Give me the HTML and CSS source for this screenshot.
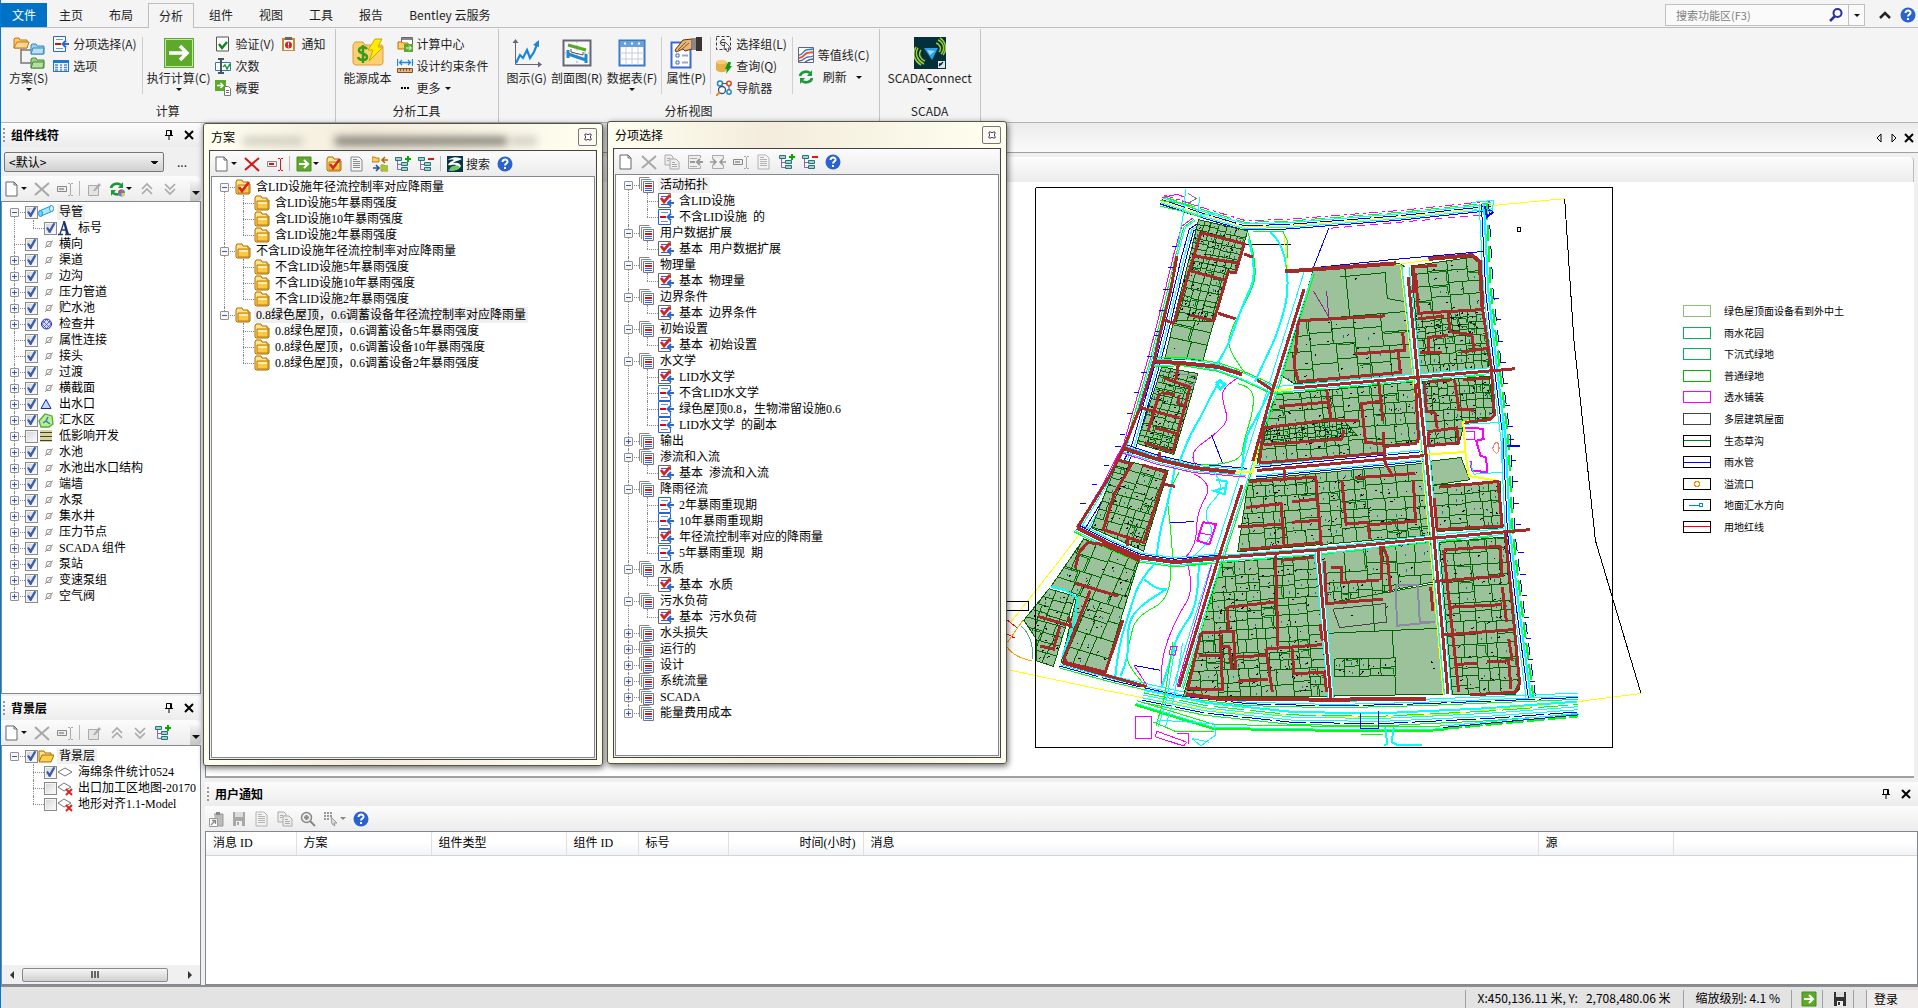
FILE: index.html
```
<!DOCTYPE html>
<html lang="zh-CN">
<head>
    <meta charset="UTF-8">
    <meta name="viewport" content="width=device-width, initial-scale=1.0">
    <title>SewerGEMS</title>
    <link rel="stylesheet" href="styles.css">
</head>
<body>
    <!-- icon sprite -->
    <svg class="sprite" aria-hidden="true">
        <symbol id="folder" viewBox="0 0 16 16"><path d="M1 3l1-2h5l1 2h5v2h2v9l-1 1H2l-1-1z" fill="#ffe488" stroke="#a86c00"/><path d="M3 6h11v8H3z" fill="#ffc844" stroke="#b87a10"/><path d="M4 7h9v2H4z" fill="#fff0b0"/></symbol>
        <symbol id="foldercheck" viewBox="0 0 16 16"><use href="#folder"/><path d="M4 8l3 4 7-9" fill="none" stroke="#d22" stroke-width="2.6"/></symbol>
        <symbol id="open" viewBox="0 0 16 16"><path d="M1 13V3h5l1 2h6v2" fill="#ffe488" stroke="#a86c00"/><path d="M1 14L4 7h12l-3 7z" fill="#ffd050" stroke="#a86c00"/></symbol>
        <symbol id="doc" viewBox="0 0 16 16"><path d="M2 1h8l3 3v11H2z" fill="#fff" stroke="#666"/><path d="M10 1v3h3" fill="none" stroke="#666"/></symbol>
        <symbol id="text" viewBox="0 0 16 16"><path d="M2 1h8l3 3v11H2z" fill="#f4f4f4" stroke="#888"/><path d="M4 5.500h7M4 7.500h7M4 9.500h7M4 11.500h7M4 3.500h4" stroke="#888"/></symbol>
        <symbol id="copy" viewBox="0 0 16 16"><path d="M1 1h6l2 2v8H1z" fill="#eee" stroke="#aaa"/><path d="M6 5h6l3 3v7H6z" fill="#eee" stroke="#aaa"/><path d="M8 8.500h3M8 10.500h5M8 12.500h5M3 4.500h3M3 6.500h2" stroke="#aaa"/></symbol>
        <symbol id="x" viewBox="0 0 16 16"><path d="M1 2l14 13M15 2L1 14" fill="none" stroke="currentColor" stroke-width="2"/></symbol>
        <symbol id="rename" viewBox="0 0 16 16"><path d="M.5 5.500h9v5h-9z" fill="#eee" stroke="#888"/><path d="M2 8h5" stroke="currentColor" stroke-width="2"/><path d="M11 2.500h2M14 2.500h2M13.500 3v11M11 14.500h2M14 14.500h2" stroke="currentColor"/></symbol>
        <symbol id="edit" viewBox="0 0 16 16"><path d="M2.500 4.500h10v10h-10z" fill="#e4e4e4" stroke="#aaa"/><path d="M7 10l6-8 2 2-6 6z" fill="#aaa"/></symbol>
        <symbol id="up" viewBox="0 0 16 16"><path d="M3 8l5-5 5 5M3 13l5-5 5 5" fill="none" stroke="#aaa" stroke-width="1.700"/></symbol>
        <symbol id="down" viewBox="0 0 16 16"><path d="M3 3l5 5 5-5M3 8l5 5 5-5" fill="none" stroke="#aaa" stroke-width="1.700"/></symbol>
        <symbol id="refresh" viewBox="0 0 16 16"><path d="M2 7a6 5 0 0 1 10-3" fill="none" stroke="#1a9a3a" stroke-width="2.600"/><path d="M14 1v6H9z" fill="#1a9a3a"/><path d="M14 9a6 5 0 0 1-10 3" fill="none" stroke="#1a9a3a" stroke-width="2.600"/><path d="M2 15V9h5z" fill="#1a9a3a"/></symbol>
        <symbol id="refreshball" viewBox="0 0 16 16"><use href="#refresh"/><circle cx="12.500" cy="12" r="3.500" fill="#4a8ad8"/><path d="M9 12a3.500 3.500 0 0 1 3.500-3.500V12z" fill="#e44"/><path d="M12.500 12h3.500a3.500 3.500 0 0 1-3.500 3.500z" fill="#ec3"/></symbol>
        <symbol id="treeplus" viewBox="0 0 16 16"><path d="M2.500 3v10.500H6M2.500 8.500H6" fill="none" stroke="#86a"/><path d="M.5 1.500h6v3h-6zM6.500 6.500h6v3h-6zM6.500 11.500h6v3h-6z" fill="#acc" stroke="#277"/><path d="M10 3h6M13 0v6" stroke="#0a0" stroke-width="2"/></symbol>
        <symbol id="treeminus" viewBox="0 0 16 16"><path d="M2.500 3v10.500H6M2.500 8.500H6" fill="none" stroke="#86a"/><path d="M.5 1.500h6v3h-6zM6.500 6.500h6v3h-6zM6.500 11.500h6v3h-6z" fill="#acc" stroke="#277"/><path d="M10 3h6" stroke="#e11" stroke-width="2"/></symbol>
        <symbol id="go" viewBox="0 0 16 16"><path d="M1 1h14v14H1z" fill="#5ea82c" stroke="#4a8a20"/><path d="M3 8h8M8 4l4 4-4 4" fill="none" stroke="#fff" stroke-width="2"/></symbol>
        <symbol id="help" viewBox="0 0 16 16"><circle cx="8" cy="8" r="7.500" fill="#2a62d0"/><path d="M5.500 6c0-3.500 5.500-3 5 0-.3 1.500-2.500 1.600-2.500 3.500M8 11v2" fill="none" stroke="#fff" stroke-width="2"/></symbol>
        <symbol id="swap" viewBox="0 0 16 16"><path d="M0 1h3l1 1h3v4H0zM9 9h3l1 1h3v5H9z" fill="#fc6" stroke="#a60" stroke-width=".8"/><path d="M9 9.500h6.500v5H9z" fill="#9c3"/><path d="M16 4h-5M13 1l-3 3 3 3" fill="none" stroke="#b60" stroke-width="1.600"/><path d="M1 12h5M4 9l3 3-3 3" fill="none" stroke="#258" stroke-width="1.600"/></symbol>
        <symbol id="bentley" viewBox="0 0 16 16"><path d="M0 0h16v16H0z" fill="#063848"/><path d="M1 4c5-4 10-3 14-1-4 2-7 2-9 4 4-1 7 0 8 3-3 5-9 5-13 4 6-1 7-3 8-5-3-1-6 1-8 0 2-4 5-4 6-5-3-1-4 0-6 0z" fill="#fff"/><path d="M3 12c3-3 8-3 10-1-2 3-7 4-10 3z" fill="#6c5"/></symbol>
        <symbol id="alt" viewBox="0 0 16 16"><path d="M12.500 4V.5h-12v15h12V12" fill="#fff" stroke="#2a62d0"/><path d="M3 3.500h7M3 12.500h7" stroke="#6a94dc"/><path d="M2 8h6" stroke="#c11" stroke-width="2"/><path d="M16 8h-5M13 4.500L9.500 8l3.500 3.500" fill="none" stroke="#2a6ad0" stroke-width="2"/></symbol>
        <symbol id="altcheck" viewBox="0 0 16 16"><path d="M12.500 5V.5h-12v14h12V13" fill="#fff" stroke="#666"/><path d="M3 3.500h8M3 11.500h8" stroke="#2a62d0"/><path d="M3 5l3 4 6-7" fill="none" stroke="#d22" stroke-width="2.800"/><path d="M16 10h-5M13 7l-3 3 3 3" fill="none" stroke="#2a6ad0" stroke-width="2"/></symbol>
        <symbol id="altgray" viewBox="0 0 16 16"><path d="M13.500 4V1.500h-12v13h12V12" fill="#eee" stroke="#aaa"/><path d="M3 4.500h7M3 12.500h7" stroke="#aaa"/><path d="M3 8h5M16 8h-5M13 5l-3 3 3 3" fill="none" stroke="#999" stroke-width="2"/></symbol>
        <symbol id="mergegray" viewBox="0 0 16 16"><path d="M2.500 5V1.500h11V5M2.500 11v3.500h11V11" fill="#eee" stroke="#aaa"/><path d="M0 8h6M3 5l3 3-3 3M16 8h-6M13 5l-3 3 3 3" fill="none" stroke="#999" stroke-width="1.600"/></symbol>
        <symbol id="stack" viewBox="0 0 16 16"><path d="M.5 12V.5h10M2.500 14V2.500h10" fill="none" stroke="#888"/><path d="M4.500 4.500h10v11h-10z" fill="#fff" stroke="#777"/><path d="M6 6.500h7M6 13.500h7M6 11.500h7" stroke="#2a62d0"/><path d="M6 9h7" stroke="#d11" stroke-width="2"/></symbol>
        <symbol id="none" viewBox="0 0 16 16"><path d="M9 5.500h4.500l-1 5H8zM7 12l8-7.500" fill="none" stroke="#999"/></symbol>
        <symbol id="pipe" viewBox="0 0 16 16"><path d="M1 7l12-5 2 5L3 12z" fill="#aee6ff" stroke="#189ae0"/><ellipse cx="2.500" cy="9.500" rx="2" ry="3" fill="#7ad0ff" stroke="#189ae0"/><ellipse cx="13.500" cy="4.500" rx="2" ry="3" fill="#dff6ff" stroke="#189ae0"/></symbol>
        <symbol id="letter" viewBox="0 0 16 16"><path d="M1 14.500h5M8 14.500h6M3 14L7 2M5 10h5" fill="none" stroke="#223a70" stroke-width="1.300"/><path d="M6 1h2l4 13H9z" fill="#1c3468"/></symbol>
        <symbol id="manhole" viewBox="0 0 16 16"><circle cx="8.500" cy="8" r="5" fill="#cdf" stroke="#22a"/><path d="M5 5l7 7M8 3l5 5M4 8l5 5M12 5l-7 7M9 3L4 8M13 8l-5 5" stroke="#44c" stroke-width=".7"/></symbol>
        <symbol id="outfall" viewBox="0 0 16 16"><path d="M3 12.500L8 3.500l5 9z" fill="#bdf" stroke="#22b"/></symbol>
        <symbol id="catchment" viewBox="0 0 16 16"><path d="M1 9l6-7 7 2 1 8-4 3H3z" fill="#b8f08a" stroke="#5a4" stroke-width="1.300"/><path d="M10 5L8 9l-3 2M8 9l4 3" fill="none" stroke="#37c" stroke-width="1.400"/></symbol>
        <symbol id="lid" viewBox="0 0 16 16"><path d="M2 2h12v12H2z" fill="#d8d49a"/><path d="M2 4.500h12M2 8.500h12M2 12.500h12" stroke="#443" stroke-width="1.200"/></symbol>
        <symbol id="layer" viewBox="0 0 16 16"><path d="M1 8l7-4 7 4-7 4z" fill="#fff" stroke="#777"/></symbol>
        <symbol id="layerx" viewBox="0 0 16 16"><path d="M1 7l6-4 7 4-7 4z" fill="#fff" stroke="#777"/><path d="M9 9l6 6M15 9l-6 6" stroke="#d22" stroke-width="2"/></symbol>
        <symbol id="pin" viewBox="0 0 16 16"><path d="M5.500 8V3.500h5V8M9.500 3v5M4 8.500h8M8 9v4" fill="none" stroke="#000"/></symbol>
        <symbol id="close" viewBox="0 0 16 16"><path d="M4 4l8 8M12 4l-8 8" stroke="#000" stroke-width="2"/></symbol>
        <symbol id="boxx" viewBox="0 0 16 16"><path d="M5 5h2l1 1 1-1h2v2l-1 1 1 1v2H9l-1-1-1 1H5V9l1-1-1-1z" fill="#fff" stroke="#445"/></symbol>
        <symbol id="save" viewBox="0 0 16 16"><path d="M2 1h12v14H2z" fill="currentColor"/><path d="M4 1h8v5H4z" fill="#ddd"/><path d="M5 10h6v5H5z" fill="#eee"/><path d="M6 11h2v3H6z" fill="currentColor"/></symbol>
        <symbol id="paste" viewBox="0 0 16 16"><path d="M6 3h9v12H8" fill="#bbb" stroke="#999"/><path d="M8 1h4v3H8z" fill="#888"/><path d="M1.500 7.500h8v8h-8z" fill="#fff" stroke="#999"/><path d="M3 14l4-4M4 9.500h3.500V13" fill="none" stroke="#888" stroke-width="1.300"/></symbol>
        <symbol id="zoomin" viewBox="0 0 16 16"><circle cx="6.500" cy="6.500" r="5" fill="#eee" stroke="#888" stroke-width="1.500"/><path d="M4 6.500h5M6.500 4v5M10 10l5 5" stroke="#888" stroke-width="2"/></symbol>
        <symbol id="pick" viewBox="0 0 16 16"><path d="M1 2h2M4 2h2M7 2h2M1 5h2M4 5h2M7 5h2M1 8h2M4 8h2" stroke="#999" stroke-width="2"/><path d="M8 6l6 6h-3l1 3-3-2z" fill="#ddd" stroke="#999"/></symbol>
        <symbol id="options" viewBox="0 0 16 16"><path d="M0 2h16v12H0z" fill="#1a78d8"/><path d="M1 5h14v8H1z" fill="#e8f4ff"/><path d="M2 7h3M7 7h2M11 7h3M2 9.500h3M7 9.500h2M11 9.500h3M2 12h3M7 12h2M11 12h3" stroke="#68a" stroke-width="1.300"/></symbol>
        <symbol id="validate" viewBox="0 0 16 16"><path d="M1.500 1h12v14h-12z" fill="#fff" stroke="#555"/><path d="M4 8l3 4 5-6" fill="none" stroke="#0a8a1a" stroke-width="2.400"/></symbol>
        <symbol id="times" viewBox="0 0 16 16"><path d="M.5 4.500h15v8H.5z" fill="#fff" stroke="#37a"/><path d="M3 1h6M3 15h6M6 1v14" stroke="#456" stroke-width="2"/><path d="M8 9l2-2 2 4 3-5" fill="none" stroke="#1a9a3a" stroke-width="1.500"/></symbol>
        <symbol id="summary" viewBox="0 0 16 16"><path d="M0 0h11v11H0z" fill="#5ea82c"/><path d="M2 5.500h6M5.500 3L8 5.500 5.500 8" fill="none" stroke="#fff" stroke-width="1.400"/><path d="M9.500 6.500h4l2 2v7h-6z" fill="#fff" stroke="#777"/><path d="M11 10.500h3M11 12.500h3" stroke="#777"/></symbol>
        <symbol id="notice" viewBox="0 0 16 16"><path d="M1 2h13v13H1z" fill="#c98a30"/><path d="M3 4h9v10H3z" fill="#fff"/><path d="M4 1h7v3H4z" fill="#666"/><circle cx="7.500" cy="9" r="3.500" fill="#d22"/><path d="M7.500 6.500v3M7.500 10.500v1" stroke="#fff"/></symbol>
        <symbol id="center" viewBox="0 0 16 16"><path d="M4.500 1.500h11v8h-11z" fill="#fff" stroke="#666"/><path d="M5 2h10v2H5z" fill="#888"/><path d="M1 6h4l1 1h5v6H1z" fill="#fc6" stroke="#b70"/><path d="M7 8h9v8H7z" fill="#5ea82c"/><path d="M9 12h5M12 9.500l2.500 2.500-2.500 2.500" fill="none" stroke="#fff"/></symbol>
        <symbol id="ruler" viewBox="0 0 16 16"><path d="M.5 1v7M15.500 1v7M3 4.500h10M5 2L2.500 4.500 5 7M11 2l2.500 2.500L11 7" fill="none" stroke="#1a8ae0" stroke-width="1.300"/><path d="M.5 10.500h15v4H.5z" fill="#ddb88a" stroke="#86501c"/><path d="M3.500 11v2M6.500 11v2M9.500 11v2M12.500 11v2" stroke="#86501c"/></symbol>
        <symbol id="more" viewBox="0 0 16 16"><path d="M4 7h2v2H4zM7 7h2v2H7zM10 7h2v2h-2z"/></symbol>
        <symbol id="select" viewBox="0 0 16 16"><path d="M.5.5h14v13H.5z" fill="none" stroke="#333" stroke-dasharray="3 2"/><path d="M9 4a3 3 0 1 0 0 5M5 6.500h4" fill="none" stroke="#333"/><path d="M9 6l6 6h-3l1 3-2 .5-1-3-2 1z" fill="#fff" stroke="#555"/></symbol>
        <symbol id="query" viewBox="0 0 16 16"><path d="M0 4v8c3 3 9 3 11 0V4z" fill="#e8b04a"/><ellipse cx="5.500" cy="4" rx="5.500" ry="2.200" fill="#f6cc7a"/><path d="M12 4l3 0-1 4h2l-6 8 1-5H9z" fill="#0a9a1a"/></symbol>
        <symbol id="nav" viewBox="0 0 16 16"><circle cx="4" cy="3.500" r="2.500" fill="#fff" stroke="#28c" stroke-width="1.500"/><circle cx="13" cy="3.500" r="2.200" fill="#fff" stroke="#d42" stroke-width="1.500"/><circle cx="6" cy="10" r="3.500" fill="#fff" stroke="#357" stroke-width="1.300"/><circle cx="13" cy="12" r="2.200" fill="#fff" stroke="#28c" stroke-width="1.500"/><path d="M6 3.500h5M13 6v4" stroke="#555"/><path d="M3.500 12.500L0 16" stroke="#e82" stroke-width="2"/></symbol>
        <symbol id="contour" viewBox="0 0 16 16"><path d="M.5.5h15v15H.5z" fill="#fff" stroke="#667"/><path d="M1 8c4 0 4-4 7-5s4 0 7-1" fill="none" stroke="#28c" stroke-width="1.500"/><path d="M1 11c5 0 5-4 8-5s4 0 6-1" fill="none" stroke="#e53" stroke-width="2"/><path d="M1 14c5 0 6-4 9-4s3 0 5-1M7 15c3-2 5-3 8-3" fill="none" stroke="#46a" stroke-width="1.300"/></symbol>
        <!-- 32px ribbon icons -->
        <symbol id="scenario" viewBox="0 0 32 32"><path d="M8 12v14h10M8 13h10" fill="none" stroke="#777" stroke-width="1.500"/><path d="M1 2l1-1h4l1 2h7v8H1z" fill="#ffc868" stroke="#c07818"/><path d="M4 5h12l-2 6H1z" fill="#ffd890" stroke="#c07818"/><path d="M18 8l1-1h4l1 2h7v8H18z" fill="#9ad0f4" stroke="#3a88b8"/><path d="M20 11h11l-1 6H18z" fill="#b8e0fa" stroke="#3a88b8"/><path d="M18 22l1-1h4l1 2h7v8H18z" fill="#9cd08c" stroke="#4a8a3a"/><path d="M20 25h11l-1 6H18z" fill="#b4e0a4" stroke="#4a8a3a"/></symbol>
        <symbol id="compute" viewBox="0 0 32 32"><path d="M1 1h30v30H1z" fill="#5ea82c"/><path d="M2.500 2.500h27v27h-27z" fill="none" stroke="#c8e4b0"/><path d="M6 16h18M17 9l7 7-7 7" fill="none" stroke="#fff" stroke-width="3.500"/></symbol>
        <symbol id="graph" viewBox="0 0 32 32"><path d="M4.500 4v23.500H29" fill="none" stroke="#667"/><path d="M1.500 6l3-4 3 4zM27 24.500l4 3-4 3z" fill="#667"/><path d="M5 26l4-8 3 3 4-8 3 8 4-6 4-10" fill="none" stroke="#1a86d8" stroke-width="2.200"/><path d="M22 8l6-5v7z" fill="#1a86d8"/></symbol>
        <symbol id="profile" viewBox="0 0 32 32"><path d="M2.500 3.500h27v25h-27z" fill="#f8f8f8" stroke="#667" stroke-width="2"/><path d="M16 4v24M3 16h26" stroke="#aaa" stroke-dasharray="2 2"/><path d="M7 8l18 5" stroke="#5a2" stroke-width="3"/><path d="M7 17l18 6M7 13v8M25 17v9" stroke="#28c" stroke-width="3" fill="none"/><path d="M10 12v3l12 3v-3" fill="#fff" stroke="#555"/></symbol>
        <symbol id="table" viewBox="0 0 32 32"><path d="M3.500 3.500h25v25h-25z" fill="#fff" stroke="#3a7ac8" stroke-width="2"/><path d="M4 4h24v6H4z" fill="#6aa0d8"/><path d="M4 16h24M4 22h24M10 10v18M16 10v18M22 10v18" stroke="#c4cede"/><path d="M8 6.500h2M15 6.500h2M22 6.500h2" stroke="#fff" stroke-width="2"/></symbol>
        <symbol id="props" viewBox="0 0 32 32"><path d="M1.500 5.500h19v25h-19z" fill="#fff" stroke="#3a6ad0" stroke-width="2"/><path d="M6 17h3v3H6zM6 24h3v3H6z" fill="none" stroke="#3a6ad0"/><path d="M12 18.500h6M12 25.500h6" stroke="#9ab" stroke-width="2"/><path d="M5 13L13 3l9-1v10l-7 2-2-2-7 3z" fill="#e8b478" stroke="#5a3410"/><path d="M8 13l8-8M11 13l8-7" stroke="#8a5a28"/><path d="M22 1h4v12h-4z" fill="#888"/><path d="M26 0h6v14h-6z" fill="#3a3434"/></symbol>
        <symbol id="scada" viewBox="0 0 32 32"><path d="M0 0h32v32H0z" fill="#04303a"/><path d="M10 11l14 0-6 12z" fill="#2aa0e8"/><path d="M13 13l8 1-5 4z" fill="#9adcff"/><path d="M7 13c-3 4-1 9 4 11M4 11c-4 6 0 13 6 16M2 10c-5 8 0 15 5 18M25 15c3-3 1-8-3-9M27 17c5-5 2-12-3-14M29 18c5-6 2-14-3-17" fill="none" stroke="#9c3" stroke-width="1.500"/><path d="M24 24h7v7h-7z" fill="#dfe8e8"/><path d="M25 29l4-4M25 27h3" stroke="#123" stroke-width="1.300"/></symbol>
    </svg>

    <header>
        <nav class="tabs">
            <button class="tab file">文件</button>
            <button class="tab">主页</button>
            <button class="tab">布局</button>
            <button class="tab active">分析</button>
            <button class="tab">组件</button>
            <button class="tab">视图</button>
            <button class="tab">工具</button>
            <button class="tab">报告</button>
            <button class="tab">Bentley 云服务</button>
            <div class="search">
                <div class="search-box">
                    <input type="text" placeholder="搜索功能区(F3)" aria-label="搜索功能区">
                    <svg class="ic" viewBox="0 0 16 16"><circle cx="9.500" cy="6" r="4" fill="none" stroke="#2a30a0" stroke-width="2"/><path d="M7 9l-5 5" stroke="#2a30a0" stroke-width="2.500"/></svg>
                </div>
                <button class="search-drop" aria-label="搜索选项"><i class="caret"></i></button>
                <button class="bare" aria-label="折叠功能区"><svg class="ic" viewBox="0 0 16 16"><path d="M3 11l5-5 5 5" fill="none" stroke="#222" stroke-width="2.500"/></svg></button>
                <button class="bare" aria-label="帮助"><svg class="ic"><use href="#help"/></svg></button>
            </div>
        </nav>
        <div class="ribbon">
            <section class="group">
                <div class="group-body">
                    <button class="big"><svg><use href="#scenario"/></svg>方案(S)<i class="caret"></i></button>
                    <div class="small-col">
                        <button class="small"><svg><use href="#alt"/></svg>分项选择(A)</button>
                        <button class="small"><svg><use href="#options"/></svg>选项</button>
                    </div>
                    <span class="vsep"></span>
                    <button class="big"><svg><use href="#compute"/></svg>执行计算(C)<i class="caret"></i></button>
                    <div class="small-col">
                        <button class="small"><svg><use href="#validate"/></svg>验证(V)</button>
                        <button class="small"><svg><use href="#times"/></svg>次数</button>
                        <button class="small"><svg><use href="#summary"/></svg>概要</button>
                    </div>
                    <div class="small-col">
                        <button class="small"><svg><use href="#notice"/></svg>通知</button>
                    </div>
                </div>
                <h2>计算</h2>
            </section>
            <section class="group">
                <div class="group-body">
                    <button class="big"><svg viewBox="0 0 32 32"><path d="M1 8l2-3h8l2 3h17l1 2v16l-2 2H3l-2-2z" fill="#fbd070" stroke="#e09a3a"/><path d="M15 12c-2-3-9-2-8 2 1 3 8 2 8 6 0 4-8 4-9 0M11 8v18" fill="none" stroke="#3a9a1a" stroke-width="2.500"/><path d="M23 2h7l-4 8h5L17 24l4-11h-5z" fill="#ffee00" stroke="#c8a800"/></svg>能源成本</button>
                    <div class="small-col">
                        <button class="small"><svg><use href="#center"/></svg>计算中心</button>
                        <button class="small"><svg><use href="#ruler"/></svg>设计约束条件</button>
                        <button class="small"><svg><use href="#more"/></svg>更多<i class="caret"></i></button>
                    </div>
                </div>
                <h2>分析工具</h2>
            </section>
            <section class="group">
                <div class="group-body">
                    <button class="big"><svg><use href="#graph"/></svg>图示(G)</button>
                    <button class="big"><svg><use href="#profile"/></svg>剖面图(R)</button>
                    <button class="big"><svg><use href="#table"/></svg>数据表(F)<i class="caret"></i></button>
                    <span class="vsep"></span>
                    <button class="big"><svg><use href="#props"/></svg>属性(P)</button>
                    <span class="vsep"></span>
                    <div class="small-col">
                        <button class="small"><svg><use href="#select"/></svg>选择组(L)</button>
                        <button class="small"><svg><use href="#query"/></svg>查询(Q)</button>
                        <button class="small"><svg><use href="#nav"/></svg>导航器</button>
                    </div>
                    <span class="vsep"></span>
                    <div class="small-col middle">
                        <button class="small"><svg><use href="#contour"/></svg>等值线(C)</button>
                        <button class="small wide"><svg><use href="#refresh"/></svg>刷新<i class="caret"></i></button>
                    </div>
                </div>
                <h2>分析视图</h2>
            </section>
            <section class="group">
                <div class="group-body">
                    <button class="big"><svg><use href="#scada"/></svg>SCADAConnect<i class="caret"></i></button>
                </div>
                <h2>SCADA</h2>
            </section>
        </div>
    </header>

    <div class="workspace">
        <aside class="dock">
            <section class="panel symbology">
                <h3><span>组件线符</span><button class="bare" aria-label="固定"><svg class="ic"><use href="#pin"/></svg></button><button class="bare" aria-label="关闭"><svg class="ic"><use href="#close"/></svg></button></h3>
                <div class="theme">
                    <select aria-label="线符"><option>&lt;默认&gt;</option></select>
                    <button class="bare" aria-label="浏览">...</button>
                </div>
                <div class="toolbar rounded">
                    <button class="drop" aria-label="新建"><svg class="ic"><use href="#doc"/></svg><i class="caret"></i></button>
                    <button aria-label="删除"><svg class="ic off"><use href="#x"/></svg></button>
                    <button aria-label="重命名"><svg class="ic off"><use href="#rename"/></svg></button>
                    <i class="tsep"></i>
                    <button aria-label="编辑"><svg class="ic"><use href="#edit"/></svg></button>
                    <button class="drop" aria-label="刷新"><svg class="ic"><use href="#refreshball"/></svg><i class="caret"></i></button>
                    <button aria-label="上移"><svg class="ic"><use href="#up"/></svg></button>
                    <button aria-label="下移"><svg class="ic"><use href="#down"/></svg></button>
                    <button class="overflow" aria-label="更多工具"><i class="caret"></i></button>
                </div>
                <ul class="tree">
                    <li><button class="tg open" aria-label="折叠"></button><label><input type="checkbox" checked><svg><use href="#pipe"/></svg><span class="sel">导管</span></label>
                        <ul>
                            <li><label><input type="checkbox" checked><svg><use href="#letter"/></svg><span>标号</span></label></li>
                        </ul>
                    </li>
                    <li><label><input type="checkbox" checked><svg><use href="#none"/></svg><span>横向</span></label></li>
                    <li><button class="tg" aria-label="展开"></button><label><input type="checkbox" checked><svg><use href="#none"/></svg><span>渠道</span></label></li>
                    <li><button class="tg" aria-label="展开"></button><label><input type="checkbox" checked><svg><use href="#none"/></svg><span>边沟</span></label></li>
                    <li><button class="tg" aria-label="展开"></button><label><input type="checkbox" checked><svg><use href="#none"/></svg><span>压力管道</span></label></li>
                    <li><button class="tg" aria-label="展开"></button><label><input type="checkbox" checked><svg><use href="#none"/></svg><span>贮水池</span></label></li>
                    <li><button class="tg" aria-label="展开"></button><label><input type="checkbox" checked><svg><use href="#manhole"/></svg><span>检查井</span></label></li>
                    <li><label><input type="checkbox" checked><svg><use href="#none"/></svg><span>属性连接</span></label></li>
                    <li><label><input type="checkbox" checked><svg><use href="#none"/></svg><span>接头</span></label></li>
                    <li><button class="tg" aria-label="展开"></button><label><input type="checkbox" checked><svg><use href="#none"/></svg><span>过渡</span></label></li>
                    <li><button class="tg" aria-label="展开"></button><label><input type="checkbox" checked><svg><use href="#none"/></svg><span>横截面</span></label></li>
                    <li><button class="tg" aria-label="展开"></button><label><input type="checkbox" checked><svg><use href="#outfall"/></svg><span>出水口</span></label></li>
                    <li><button class="tg" aria-label="展开"></button><label><input type="checkbox" checked><svg><use href="#catchment"/></svg><span>汇水区</span></label></li>
                    <li><button class="tg" aria-label="展开"></button><label><input type="checkbox"><svg><use href="#lid"/></svg><span>低影响开发</span></label></li>
                    <li><button class="tg" aria-label="展开"></button><label><input type="checkbox" checked><svg><use href="#none"/></svg><span>水池</span></label></li>
                    <li><button class="tg" aria-label="展开"></button><label><input type="checkbox" checked><svg><use href="#none"/></svg><span>水池出水口结构</span></label></li>
                    <li><button class="tg" aria-label="展开"></button><label><input type="checkbox" checked><svg><use href="#none"/></svg><span>端墙</span></label></li>
                    <li><button class="tg" aria-label="展开"></button><label><input type="checkbox" checked><svg><use href="#none"/></svg><span>水泵</span></label></li>
                    <li><button class="tg" aria-label="展开"></button><label><input type="checkbox" checked><svg><use href="#none"/></svg><span>集水井</span></label></li>
                    <li><button class="tg" aria-label="展开"></button><label><input type="checkbox" checked><svg><use href="#none"/></svg><span>压力节点</span></label></li>
                    <li><button class="tg" aria-label="展开"></button><label><input type="checkbox" checked><svg><use href="#none"/></svg><span>SCADA 组件</span></label></li>
                    <li><button class="tg" aria-label="展开"></button><label><input type="checkbox" checked><svg><use href="#none"/></svg><span>泵站</span></label></li>
                    <li><button class="tg" aria-label="展开"></button><label><input type="checkbox" checked><svg><use href="#none"/></svg><span>变速泵组</span></label></li>
                    <li><button class="tg" aria-label="展开"></button><label><input type="checkbox" checked><svg><use href="#none"/></svg><span>空气阀</span></label></li>
                </ul>
            </section>
            <section class="panel layers">
                <h3><span>背景层</span><button class="bare" aria-label="固定"><svg class="ic"><use href="#pin"/></svg></button><button class="bare" aria-label="关闭"><svg class="ic"><use href="#close"/></svg></button></h3>
                <div class="toolbar rounded">
                    <button class="drop" aria-label="新建"><svg class="ic"><use href="#doc"/></svg><i class="caret"></i></button>
                    <button aria-label="删除"><svg class="ic off"><use href="#x"/></svg></button>
                    <button aria-label="重命名"><svg class="ic off"><use href="#rename"/></svg></button>
                    <i class="tsep"></i>
                    <button aria-label="编辑"><svg class="ic"><use href="#edit"/></svg></button>
                    <button aria-label="上移"><svg class="ic"><use href="#up"/></svg></button>
                    <button aria-label="下移"><svg class="ic"><use href="#down"/></svg></button>
                    <button aria-label="展开全部"><svg class="ic"><use href="#treeplus"/></svg></button>
                    <button class="overflow" aria-label="更多工具"><i class="caret"></i></button>
                </div>
                <ul class="tree">
                    <li><button class="tg open" aria-label="折叠"></button><label><input type="checkbox" checked><svg><use href="#open"/></svg><span class="sel">背景层</span></label>
                        <ul>
                            <li><label><input type="checkbox" checked><svg><use href="#layer"/></svg><span>海绵条件统计0524</span></label></li>
                            <li><label><input type="checkbox"><svg><use href="#layerx"/></svg><span>出口加工区地图-20170</span></label></li>
                            <li><label><input type="checkbox"><svg><use href="#layerx"/></svg><span>地形对齐1.1-Model</span></label></li>
                        </ul>
                    </li>
                </ul>
                <div class="hscroll"><i class="left"></i><span class="thumb"></span><i class="right"></i></div>
            </section>
        </aside>

        <main>
            <div class="doc-tabs">
                <button class="bare" aria-label="上一个"><svg viewBox="0 0 10 10"><path d="M7 1v8L3 5z" fill="none" stroke="#000"/></svg></button>
                <button class="bare" aria-label="下一个"><svg viewBox="0 0 10 10"><path d="M3 1v8l4-4z" fill="none" stroke="#000"/></svg></button>
                <button class="bare" aria-label="关闭"><svg viewBox="0 0 10 10"><path d="M1 1l8 8M9 1L1 9" stroke="#000" stroke-width="2"/></svg></button>
            </div>
            <div class="view-bar"></div>
            <div class="canvas">
                <svg id="map" viewBox="0 5 1568 1563" preserveAspectRatio="none"></svg>
                <ul class="legend">
                    <li><i class="k1"></i>绿色屋顶面设备看到外中土</li>
                    <li><i class="k2"></i>雨水花园</li>
                    <li><i class="k2"></i>下沉式绿地</li>
                    <li><i class="k3"></i>普通绿地</li>
                    <li><i class="k4"></i>透水铺装</li>
                    <li><i class="k5"></i>多层建筑屋面</li>
                    <li><i class="bar green"></i>生态草沟</li>
                    <li><i class="bar blue"></i>雨水管</li>
                    <li><i class="outlet"></i>溢流口</li>
                    <li><i class="flow"></i>地面汇水方向</li>
                    <li><i class="bar red"></i>用地红线</li>
                </ul>
            </div>
            <section class="notices">
                <h3><span>用户通知</span><button class="bare" aria-label="固定"><svg class="ic"><use href="#pin"/></svg></button><button class="bare" aria-label="关闭"><svg class="ic"><use href="#close"/></svg></button></h3>
                <div class="toolbar">
                    <button aria-label="粘贴"><svg class="ic"><use href="#paste"/></svg></button>
                    <button aria-label="保存"><svg class="ic off"><use href="#save"/></svg></button>
                    <button aria-label="报告"><svg class="ic faded"><use href="#text"/></svg></button>
                    <button aria-label="复制"><svg class="ic"><use href="#copy"/></svg></button>
                    <button aria-label="缩放"><svg class="ic"><use href="#zoomin"/></svg></button>
                    <button class="drop" aria-label="选择"><svg class="ic"><use href="#pick"/></svg><i class="caret off"></i></button>
                    <button aria-label="帮助"><svg class="ic"><use href="#help"/></svg></button>
                </div>
                <div class="table-wrap">
                    <table>
                        <thead>
                            <tr><th class="c90">消息 ID</th><th class="c135">方案</th><th class="c135">组件类型</th><th class="c72">组件 ID</th><th class="c90">标号</th><th class="c135 num">时间(小时)</th><th class="c675">消息</th><th class="c135">源</th><th></th></tr>
                        </thead>
                    </table>
                </div>
            </section>
        </main>
    </div>

    <footer>
        <span class="coord">X:450,136.11 米, Y:&nbsp;&nbsp; 2,708,480.06 米</span>
        <span class="zoom">缩放级别: 4.1 %</span>
        <button aria-label="计算"><svg class="ic"><use href="#go"/></svg></button>
        <button aria-label="保存"><svg class="ic dark"><use href="#save"/></svg></button>
        <span class="blank"></span>
        <button class="login">登录</button>
    </footer>

    <div class="dialog scenarios" role="dialog" aria-label="方案">
        <div class="title"><span>方案</span><i class="ghost short"></i><i class="ghost long"></i><i class="ghost ext"></i><button aria-label="关闭"><svg class="ic"><use href="#boxx"/></svg></button></div>
        <div class="frame">
            <div class="toolbar">
                <button class="drop" aria-label="新建"><svg class="ic"><use href="#doc"/></svg><i class="caret"></i></button>
                <button aria-label="删除"><svg class="ic red"><use href="#x"/></svg></button>
                <button aria-label="重命名"><svg class="ic red"><use href="#rename"/></svg></button>
                <i class="tsep"></i>
                <button class="drop" aria-label="计算"><svg class="ic"><use href="#go"/></svg><i class="caret"></i></button>
                <button aria-label="设为当前"><svg class="ic"><use href="#foldercheck"/></svg></button>
                <button aria-label="报告"><svg class="ic"><use href="#text"/></svg></button>
                <button aria-label="交换"><svg class="ic"><use href="#swap"/></svg></button>
                <button aria-label="展开全部"><svg class="ic"><use href="#treeplus"/></svg></button>
                <button aria-label="折叠全部"><svg class="ic"><use href="#treeminus"/></svg></button>
                <i class="tsep"></i>
                <button class="with-text"><svg class="ic"><use href="#bentley"/></svg>搜索</button>
                <button aria-label="帮助"><svg class="ic"><use href="#help"/></svg></button>
            </div>
            <ul class="tree">
                <li><button class="tg open" aria-label="折叠"></button><div><svg><use href="#foldercheck"/></svg><span>含LID设施年径流控制率对应降雨量</span></div>
                    <ul>
                        <li><div><svg><use href="#folder"/></svg><span>含LID设施5年暴雨强度</span></div></li>
                        <li><div><svg><use href="#folder"/></svg><span>含LID设施10年暴雨强度</span></div></li>
                        <li><div><svg><use href="#folder"/></svg><span>含LID设施2年暴雨强度</span></div></li>
                    </ul>
                </li>
                <li><button class="tg open" aria-label="折叠"></button><div><svg><use href="#folder"/></svg><span>不含LID设施年径流控制率对应降雨量</span></div>
                    <ul>
                        <li><div><svg><use href="#folder"/></svg><span>不含LID设施5年暴雨强度</span></div></li>
                        <li><div><svg><use href="#folder"/></svg><span>不含LID设施10年暴雨强度</span></div></li>
                        <li><div><svg><use href="#folder"/></svg><span>不含LID设施2年暴雨强度</span></div></li>
                    </ul>
                </li>
                <li><button class="tg open" aria-label="折叠"></button><div><svg><use href="#folder"/></svg><span class="sel">0.8绿色屋顶，0.6调蓄设备年径流控制率对应降雨量</span></div>
                    <ul>
                        <li><div><svg><use href="#folder"/></svg><span>0.8绿色屋顶，0.6调蓄设备5年暴雨强度</span></div></li>
                        <li><div><svg><use href="#folder"/></svg><span>0.8绿色屋顶，0.6调蓄设备10年暴雨强度</span></div></li>
                        <li><div><svg><use href="#folder"/></svg><span>0.8绿色屋顶，0.6调蓄设备2年暴雨强度</span></div></li>
                    </ul>
                </li>
            </ul>
        </div>
    </div>

    <div class="dialog alternatives" role="dialog" aria-label="分项选择">
        <div class="title"><span>分项选择</span><button aria-label="关闭"><svg class="ic"><use href="#boxx"/></svg></button></div>
        <div class="frame">
            <div class="toolbar">
                <button aria-label="新建"><svg class="ic"><use href="#doc"/></svg></button>
                <button aria-label="删除"><svg class="ic off"><use href="#x"/></svg></button>
                <button aria-label="复制"><svg class="ic"><use href="#copy"/></svg></button>
                <button aria-label="打开"><svg class="ic"><use href="#altgray"/></svg></button>
                <button aria-label="合并"><svg class="ic"><use href="#mergegray"/></svg></button>
                <button aria-label="重命名"><svg class="ic off"><use href="#rename"/></svg></button>
                <button aria-label="报告"><svg class="ic faded"><use href="#text"/></svg></button>
                <button aria-label="展开全部"><svg class="ic"><use href="#treeplus"/></svg></button>
                <button aria-label="折叠全部"><svg class="ic"><use href="#treeminus"/></svg></button>
                <button aria-label="帮助"><svg class="ic"><use href="#help"/></svg></button>
            </div>
            <ul class="tree">
                <li><button class="tg open" aria-label="折叠"></button><div><svg><use href="#stack"/></svg><span class="sel">活动拓扑</span></div>
                    <ul>
                        <li><div><svg><use href="#altcheck"/></svg><span>含LID设施</span></div></li>
                        <li><div><svg><use href="#alt"/></svg><span>不含LID设施&nbsp; 的</span></div></li>
                    </ul>
                </li>
                <li><button class="tg open" aria-label="折叠"></button><div><svg><use href="#stack"/></svg><span>用户数据扩展</span></div>
                    <ul><li><div><svg><use href="#altcheck"/></svg><span>基本&nbsp; 用户数据扩展</span></div></li></ul>
                </li>
                <li><button class="tg open" aria-label="折叠"></button><div><svg><use href="#stack"/></svg><span>物理量</span></div>
                    <ul><li><div><svg><use href="#altcheck"/></svg><span>基本&nbsp; 物理量</span></div></li></ul>
                </li>
                <li><button class="tg open" aria-label="折叠"></button><div><svg><use href="#stack"/></svg><span>边界条件</span></div>
                    <ul><li><div><svg><use href="#altcheck"/></svg><span>基本&nbsp; 边界条件</span></div></li></ul>
                </li>
                <li><button class="tg open" aria-label="折叠"></button><div><svg><use href="#stack"/></svg><span>初始设置</span></div>
                    <ul><li><div><svg><use href="#altcheck"/></svg><span>基本&nbsp; 初始设置</span></div></li></ul>
                </li>
                <li><button class="tg open" aria-label="折叠"></button><div><svg><use href="#stack"/></svg><span>水文学</span></div>
                    <ul>
                        <li><div><svg><use href="#altcheck"/></svg><span>LID水文学</span></div></li>
                        <li><div><svg><use href="#alt"/></svg><span>不含LID水文学</span></div></li>
                        <li><div><svg><use href="#alt"/></svg><span>绿色屋顶0.8，生物滞留设施0.6</span></div></li>
                        <li><div><svg><use href="#alt"/></svg><span>LID水文学&nbsp; 的副本</span></div></li>
                    </ul>
                </li>
                <li><button class="tg" aria-label="展开"></button><div><svg><use href="#stack"/></svg><span>输出</span></div></li>
                <li><button class="tg open" aria-label="折叠"></button><div><svg><use href="#stack"/></svg><span>渗流和入流</span></div>
                    <ul><li><div><svg><use href="#altcheck"/></svg><span>基本&nbsp; 渗流和入流</span></div></li></ul>
                </li>
                <li><button class="tg open" aria-label="折叠"></button><div><svg><use href="#stack"/></svg><span>降雨径流</span></div>
                    <ul>
                        <li><div><svg><use href="#alt"/></svg><span>2年暴雨重现期</span></div></li>
                        <li><div><svg><use href="#alt"/></svg><span>10年暴雨重现期</span></div></li>
                        <li><div><svg><use href="#altcheck"/></svg><span>年径流控制率对应的降雨量</span></div></li>
                        <li><div><svg><use href="#alt"/></svg><span>5年暴雨重现&nbsp; 期</span></div></li>
                    </ul>
                </li>
                <li><button class="tg open" aria-label="折叠"></button><div><svg><use href="#stack"/></svg><span>水质</span></div>
                    <ul><li><div><svg><use href="#altcheck"/></svg><span>基本&nbsp; 水质</span></div></li></ul>
                </li>
                <li><button class="tg open" aria-label="折叠"></button><div><svg><use href="#stack"/></svg><span>污水负荷</span></div>
                    <ul><li><div><svg><use href="#altcheck"/></svg><span>基本&nbsp; 污水负荷</span></div></li></ul>
                </li>
                <li><button class="tg" aria-label="展开"></button><div><svg><use href="#stack"/></svg><span>水头损失</span></div></li>
                <li><button class="tg" aria-label="展开"></button><div><svg><use href="#stack"/></svg><span>运行的</span></div></li>
                <li><button class="tg" aria-label="展开"></button><div><svg><use href="#stack"/></svg><span>设计</span></div></li>
                <li><button class="tg" aria-label="展开"></button><div><svg><use href="#stack"/></svg><span>系统流量</span></div></li>
                <li><button class="tg" aria-label="展开"></button><div><svg><use href="#stack"/></svg><span>SCADA</span></div></li>
                <li><button class="tg" aria-label="展开"></button><div><svg><use href="#stack"/></svg><span>能量费用成本</span></div></li>
            </ul>
        </div>
    </div>

    <script src="map.js"></script>
</body>
</html>
```

FILE: styles.css
```
* {
    box-sizing: border-box;
}
body {
    margin: 0;
    height: 100vh;
    display: flex;
    flex-direction: column;
    overflow: hidden;
    border-left: 1px solid #0078d7;
    background-color: #f0f0f0;
    color: #1e1e1e;
    font-family: "Noto Sans CJK SC", "Noto Sans", sans-serif;
    font-size: 12px;
    line-height: 16px;
}
h2, h3, ul {
    margin: 0;
    padding: 0;
    font-size: 12px;
    list-style: none;
}
button {
    margin: 0;
    padding: 0;
    border: none;
    background: none;
    color: inherit;
    font: inherit;
    white-space: nowrap;
}
svg {
    display: block;
    flex: none;
}
.sprite {
    position: absolute;
    width: 0;
    height: 0;
}
.ic {
    width: 16px;
    height: 16px;
    color: #333;
}
.ic.off {
    color: #a8a8a8;
}
.ic.red {
    color: #d01818;
}
.ic.faded {
    opacity: 0.6;
}
.caret {
    flex: none;
    width: 0;
    height: 0;
    border: 3px solid transparent;
    border-top-color: #111;
    border-bottom: none;
}
.caret.off {
    border-top-color: #888;
}

/* ribbon */
header {
    flex: none;
    background-color: #f4f4f4;
    border-bottom: 1px solid #b4b4b4;
}
.tabs {
    display: flex;
    align-items: flex-end;
    height: 28px;
    border-bottom: 1px solid #bdbdbd;
}
.tab {
    height: 24px;
    margin-right: 4px;
    padding: 0 11px;
}
.tab.file {
    margin-right: 1px;
    background-color: #0072c6;
    color: #fff;
}
.tab.active {
    height: 25px;
    padding: 0 10px;
    margin-bottom: -1px;
    border: 1px solid #bdbdbd;
    border-bottom: none;
    background-color: #f4f4f4;
}
.search {
    display: flex;
    align-items: center;
    margin-left: auto;
    height: 28px;
    padding: 4px 2px 0 0;
}
.search-box {
    display: flex;
    align-items: center;
    width: 184px;
    height: 22px;
    padding: 0 4px 0 8px;
    border: 1px solid #c0c0c0;
    background-color: #fafafa;
}
.search-box input {
    flex: 1;
    min-width: 0;
    border: none;
    background: none;
    font: inherit;
    font-size: 11px;
}
.search-box input::placeholder {
    color: #808080;
}
.search-drop {
    display: flex;
    align-items: center;
    justify-content: center;
    width: 16px;
    height: 22px;
    margin-right: 12px;
    border: 1px solid #c0c0c0;
    border-left: none;
    background-color: #fafafa;
}
.search .bare + .bare {
    margin-left: 7px;
}
.ribbon {
    display: flex;
    height: 94px;
}
.group {
    display: flex;
    flex-direction: column;
    margin-top: 1px;
    padding: 0 6px;
    border-right: 1px solid #c4c4c4;
}
.group-body {
    display: flex;
    align-items: flex-start;
    height: 74px;
    padding-top: 4px;
}
.group h2 {
    text-align: center;
    font-weight: normal;
}
.big {
    display: flex;
    flex-direction: column;
    align-items: center;
    margin-top: 4px;
    padding: 0 2px;
}
.big svg {
    width: 32px;
    height: 32px;
    margin-bottom: 1px;
}
.big .caret {
    margin-top: 2px;
}
.small-col {
    display: flex;
    flex-direction: column;
    padding: 0 3px;
}
.small-col + .small-col {
    margin-left: 1px;
}
.small-col.middle {
    padding-top: 11px;
}
.small {
    display: flex;
    align-items: center;
    gap: 4px;
    height: 22px;
}
.small svg {
    width: 16px;
    height: 16px;
}
.small.wide {
    gap: 9px;
}
.vsep {
    width: 1px;
    height: 57px;
    margin: 4px 2px 0;
    background-color: #cfcfcf;
}

/* docked panels */
.workspace {
    flex: 1;
    display: flex;
    min-height: 0;
    gap: 4px;
}
.dock {
    display: flex;
    flex-direction: column;
    width: 200px;
    gap: 2px;
}
.panel {
    display: flex;
    flex-direction: column;
    min-height: 0;
}
.symbology {
    flex: 571;
}
.layers {
    flex: 289;
}
h3 {
    display: flex;
    align-items: center;
    gap: 4px;
    flex: none;
    height: 24px;
    padding: 0 4px 0 10px;
    background: linear-gradient(#fcfcfc, #ececec);
    color: #000;
}
h3::before {
    content: "";
    width: 0;
    height: 14px;
    margin-left: -8px;
    margin-right: 2px;
    border-left: 2px dotted #999;
}
h3 span {
    flex: 1;
}
.theme {
    display: flex;
    align-items: center;
    flex: none;
    height: 29px;
    padding: 0 14px 0 3px;
}
.theme select {
    flex: none;
    width: 160px;
    height: 20px;
    margin-right: auto;
    padding: 0 4px;
    appearance: none;
    border: 1px solid #777;
    border-radius: 2px;
    background: linear-gradient(#111, #111) no-repeat right 5px top 8px / 7px 1px,
        linear-gradient(#111, #111) no-repeat right 6px top 9px / 5px 1px,
        linear-gradient(#111, #111) no-repeat right 7px top 10px / 3px 1px,
        linear-gradient(#f4f4f4, #d0d0d0);
    color: #000;
    font-family: inherit;
    font-size: 12px;
}
.toolbar {
    display: flex;
    align-items: center;
    gap: 7px;
    flex: none;
    height: 25px;
    padding: 0 3px;
    background: linear-gradient(#fcfcfc, #ececec);
}
.toolbar .drop {
    display: flex;
    align-items: center;
    gap: 1px;
}
.tsep {
    width: 1px;
    height: 15px;
    margin: 0 -1px;
    background-color: #b8b8b8;
}
.toolbar .with-text {
    display: flex;
    align-items: center;
    gap: 3px;
}
.toolbar.rounded {
    padding-right: 0;
    border-radius: 0 6px 0 0;
}
.overflow {
    display: flex;
    align-items: flex-end;
    justify-content: center;
    align-self: flex-end;
    width: 11px;
    height: 20px;
    margin-left: auto;
    padding-bottom: 4px;
    border-radius: 0 0 4px 0;
    background: linear-gradient(#f4f4f4, #c4c4c4);
}
.overflow .caret {
    padding-top: 2px;
    border-width: 4px;
    border-bottom: none;
    background: linear-gradient(#111, #111) no-repeat top / 6px 1px;
    background-origin: border-box;
}

/* trees */
.tree {
    flex: 1;
    min-height: 0;
    overflow: hidden;
    padding: 2px 0 0 8px;
    border: 1px solid #828790;
    background-color: #fff;
    color: #000;
    font-family: "Liberation Serif", "Noto Sans CJK SC", serif;
}
.tree ul {
    padding-left: 19px;
}
.tree li {
    position: relative;
    padding-left: 15px;
}
.tree li ul {
    margin-left: -15px;
}
.tree li::before {
    content: "";
    position: absolute;
    left: 4px;
    top: 0;
    height: 100%;
    border-left: 1px dotted #888;
}
.tree li:last-child::before {
    height: 8px;
}
.tree > li:first-child::before {
    top: 8px;
}
.tree > li:first-child:last-child::before {
    height: 0;
}
.tree li::after {
    content: "";
    position: absolute;
    left: 4px;
    top: 8px;
    width: 11px;
    border-top: 1px dotted #888;
}
.tree label, .tree div {
    display: flex;
    align-items: center;
    height: 16px;
}
.tree svg {
    width: 16px;
    height: 16px;
    margin-right: 3px;
}
.tree span {
    height: 16px;
    padding: 0 2px;
    line-height: 16px;
    white-space: nowrap;
}
.tree .sel {
    background-color: #f0f0f0;
}
.tree input {
    flex: none;
    width: 13px;
    height: 13px;
    margin: 0;
    appearance: none;
    border: 1px solid #8a8a8a;
    outline: 1px solid #f4f4f4;
    outline-offset: -2px;
    background: linear-gradient(135deg, #cfd3d8, #fff);
}
.tree input:checked::before {
    content: "";
    display: block;
    width: 11px;
    height: 11px;
    background-color: #3a5ca8;
    clip-path: polygon(10% 50%, 25% 40%, 42% 62%, 75% 5%, 95% 10%, 48% 95%, 36% 95%);
}
.tg {
    position: absolute;
    z-index: 1;
    left: 0;
    top: 4px;
    width: 9px;
    height: 9px;
    border: 1px solid #919191;
    border-radius: 1px;
    background: linear-gradient(#3a5ca8, #3a5ca8) no-repeat center / 5px 1px,
        linear-gradient(#3a5ca8, #3a5ca8) no-repeat center / 1px 5px, #f6f6f6;
}
.tg.open {
    background: linear-gradient(#3a5ca8, #3a5ca8) no-repeat center / 5px 1px, #f6f6f6;
}
.layers .tree {
    border-bottom: none;
}
.hscroll {
    display: flex;
    align-items: center;
    flex: none;
    height: 20px;
    padding: 0 8px;
    gap: 8px;
    border: 1px solid #828790;
    border-top: none;
    background-color: #f0f0f0;
}
.hscroll .left, .hscroll .right {
    border: 4px solid transparent;
    border-left-width: 0;
    border-right-color: #333;
}
.hscroll .right {
    margin-left: auto;
    border-width: 4px 0 4px 4px;
    border-right-color: transparent;
    border-left-color: #333;
}
.thumb {
    width: 146px;
    height: 14px;
    border: 1px solid #8a8a8a;
    border-radius: 2px;
    background: repeating-linear-gradient(90deg, #666 0 2px, transparent 2px 3px) no-repeat center / 8px 7px,
        linear-gradient(#f6f6f6, #cfcfcf);
}

/* drawing area */
main {
    flex: 1;
    display: flex;
    flex-direction: column;
    min-width: 0;
}
.doc-tabs {
    display: flex;
    align-items: center;
    justify-content: flex-end;
    gap: 5px;
    flex: none;
    height: 30px;
    padding-right: 4px;
    border-bottom: 1px solid #a0a0a0;
    background: linear-gradient(#ececec, #fafafa);
}
.doc-tabs svg {
    width: 10px;
    height: 10px;
}
.view-bar {
    flex: none;
    height: 25px;
    margin: 4px 4px 0 0;
    border-right: 1px solid #bbb;
    border-radius: 0 4px 0 0;
    background: linear-gradient(#fdfdfd, #ececec);
}
.canvas {
    position: relative;
    flex: 1;
    min-height: 0;
    overflow: hidden;
    margin-right: 4px;
    border-left: 1px solid #828790;
    border-bottom: 2px solid #a0a0a0;
    background-color: #fff;
}
#map {
    position: absolute;
    left: 804px;
    top: 0;
    width: 680px;
    height: 578px;
    overflow: visible;
    shape-rendering: crispEdges;
}
#map path {
    fill: none;
    vector-effect: non-scaling-stroke;
}
.legend {
    position: absolute;
    left: 1477px;
    top: 121px;
    height: 232px;
    display: flex;
    flex-direction: column;
    justify-content: space-between;
    color: #000;
    font-size: 10px;
}
.legend li {
    display: flex;
    align-items: center;
    gap: 13px;
    height: 16px;
    white-space: nowrap;
}
.legend i {
    width: 28px;
    height: 12px;
    border: 1px solid #000;
}
.legend .k1 {
    border-color: #8fbc7f;
}
.legend .k2 {
    border-color: #00b45c;
}
.legend .k3 {
    border-color: #00bc00;
}
.legend .k4 {
    border-color: #f0f;
}
.legend .k5 {
    border-color: #444;
}
.legend .bar {
    background: linear-gradient(currentColor, currentColor) no-repeat center / 100% 1px;
}
.legend .green {
    color: #0a7a1a;
    border-color: #000;
}
.legend .blue {
    color: #00f;
}
.legend .red {
    color: #f00;
}
.legend .outlet {
    background: radial-gradient(circle, transparent 2px, #f80 2px 3px, transparent 3px);
}
.legend .flow {
    background: linear-gradient(#fff, #fff) no-repeat 16px 4px / 2px 2px,
        linear-gradient(#08b, #08b) no-repeat 15px 3px / 4px 4px,
        linear-gradient(#08b, #08b) no-repeat 5px 5px / 10px 1px;
}

/* user notifications */
.notices {
    display: flex;
    flex-direction: column;
    flex: none;
    height: 24%;
    padding-top: 4px;
}
.table-wrap {
    flex: 1;
    border: 1px solid #828790;
    background-color: #fff;
}
table {
    width: 100%;
    table-layout: fixed;
    border-collapse: collapse;
}
th {
    height: 23px;
    padding: 0 7px;
    border-right: 1px solid #e0e0e4;
    border-bottom: 1px solid #d5d5d5;
    background: linear-gradient(#fff 45%, #f1f2f4);
    color: #000;
    font-family: "Liberation Serif", "Noto Sans CJK SC", serif;
    font-weight: normal;
    text-align: left;
}
th:last-child {
    border-right: none;
}
.num {
    text-align: right;
}
.c72 {
    width: 72px;
}
.c90 {
    width: 90px;
}
.c135 {
    width: 135px;
}
.c675 {
    width: 675px;
}

/* status bar */
footer {
    display: flex;
    align-items: stretch;
    justify-content: flex-end;
    flex: none;
    height: 23px;
    padding-top: 3px;
    border-top: 2px solid #8c8c90;
    background-color: #e3e3e3;
    color: #000;
}
footer > * {
    padding: 0 8px 0 12px;
    border-left: 1px solid #a0a0a0;
}
footer .coord {
    padding: 0 12px;
}
footer .zoom {
    padding-right: 11px;
}
footer button {
    padding: 0 5px 0 9px;
}
footer .blank {
    padding: 0 6px;
}
footer .login {
    padding: 0 20px 0 7px;
    background-color: #f0ecec;
}

/* floating windows */
.dialog {
    position: absolute;
    display: flex;
    flex-direction: column;
    padding: 0 5px 5px;
    border: 1px solid #55544c;
    border-radius: 3px;
    background: linear-gradient(90deg, #fffff0, #f3ecdc 40%, #fffff0);
    box-shadow: 1px 2px 6px rgba(0, 0, 0, 0.6);
}
.scenarios {
    left: 203px;
    top: 123px;
    width: 400px;
    height: 643px;
}
.alternatives {
    left: 607px;
    top: 121px;
    width: 400px;
    height: 643px;
}
.title {
    display: flex;
    align-items: center;
    gap: 8px;
    height: 26px;
    padding-left: 2px;
    color: #000;
}
.title button {
    display: flex;
    align-items: center;
    justify-content: center;
    width: 19px;
    height: 18px;
    margin-left: auto;
    border: 1px solid #777;
    border-radius: 2px;
    background-color: #fcfaf0;
}
.ghost {
    height: 8px;
    margin-top: 8px;
    background-color: #a09c92;
    filter: blur(4px);
}
.ghost.short {
    width: 60px;
    opacity: 0.5;
}
.ghost.long {
    width: 172px;
    margin-left: 24px;
    background-color: #77746c;
}
.ghost.ext {
    width: 26px;
    margin-left: -4px;
    opacity: 0.5;
}
.frame {
    display: flex;
    flex-direction: column;
    flex: 1;
    min-height: 0;
    padding: 0 1px 1px;
    border: 1px solid #444;
    background-color: #f0f0f0;
}
```

FILE: map.js
```
// Site drawing: parcels, roads and pipe network
const map = document.getElementById("map");
const NS = "http://www.w3.org/2000/svg";
const GREEN = "#00ff00", CYAN = "#00ffff", BLUE = "#0000ff", PINK = "#ff00ff",
      YELLOW = "#ffff00", BROWN = "#a52a2a", DARK = "#006400";

let seed = 7;
function rnd() {
    seed = (seed * 16807) % 2147483647;
    return seed / 2147483647;
}

function nums(s) {
    const n = s.split(/[ ,]+/).map(Number);
    const pts = [];
    for (let i = 0; i < n.length; i += 2) pts.push([n[i], n[i + 1]]);
    return pts;
}

function path(d, color, width = 1, dash, parent = map) {
    const p = document.createElementNS(NS, "path");
    p.setAttribute("d", d);
    p.setAttribute("stroke", color);
    p.setAttribute("stroke-width", width);
    if (dash) p.setAttribute("stroke-dasharray", dash);
    parent.appendChild(p);
    return p;
}

function line(s, color, width, dash) {
    return path("M" + nums(s).join("L"), color, width, dash);
}

function curve(s, color, width) {
    const p = nums(s);
    let d = "M" + p[0];
    for (let i = 1; i < p.length - 1; i++) {
        const end = i == p.length - 2 ? p[i + 1] : [(p[i][0] + p[i + 1][0]) / 2, (p[i][1] + p[i + 1][1]) / 2];
        d += "Q" + p[i] + " " + end;
    }
    return path(d, color, width);
}

// parallel lines at given offsets from a centre line
function road(s, lines) {
    const p = nums(s);
    lines.forEach(([off, color, width, dash]) => {
        const out = p.map((pt, i) => {
            const a = p[Math.max(i - 1, 0)], b = p[Math.min(i + 1, p.length - 1)];
            const dx = b[0] - a[0], dy = b[1] - a[1], l = Math.hypot(dx, dy);
            return [pt[0] - dy / l * off, pt[1] + dx / l * off];
        });
        path("M" + out.join("L"), color, width || 1, dash);
    });
}

// short marks across a line
function ticks(s, step, len, color) {
    const p = nums(s);
    let d = "";
    for (let i = 0; i < p.length - 1; i++) {
        const dx = p[i + 1][0] - p[i][0], dy = p[i + 1][1] - p[i][1], l = Math.hypot(dx, dy);
        for (let t = 0; t < l; t += step) {
            d += `M${p[i][0] + dx * t / l} ${p[i][1] + dy * t / l}h${len}`;
        }
    }
    path(d, color, 1);
}

// green parcel, split at random into lots of about "cell" size
let clipId = 0;
function block(s, angle, cell, marks = 1) {
    const pts = nums(s);
    const d = "M" + pts.join("L") + "Z";
    const clip = document.createElementNS(NS, "clipPath");
    clip.id = "clip" + clipId++;
    const cp = document.createElementNS(NS, "path");
    cp.setAttribute("d", d);
    clip.appendChild(cp);
    map.appendChild(clip);
    path(d, DARK, 1).style.fill = "#9cc29c";

    const g = document.createElementNS(NS, "g");
    g.setAttribute("clip-path", `url(#${clip.id})`);
    map.appendChild(g);
    const a = angle * Math.PI / 180, c = Math.cos(a), n = Math.sin(a);
    const us = pts.map(p => p[0] * c + p[1] * n), vs = pts.map(p => -p[0] * n + p[1] * c);
    const at = (u, v) => [(u * c - v * n).toFixed(1), (u * n + v * c).toFixed(1)].join(" ");
    let lots = "", specks = "", teal = "", inner = "";
    (function split(u0, v0, u1, v1) {
        const w = u1 - u0, h = v1 - v0;
        if (Math.max(w, h) > cell) {
            const k = 0.4 + rnd() * 0.2;
            if (w > h) { split(u0, v0, u0 + w * k, v1); split(u0 + w * k, v0, u1, v1); }
            else { split(u0, v0, u1, v0 + h * k); split(u0, v0 + h * k, u1, v1); }
            return;
        }
        lots += `M${at(u0, v0)}L${at(u1, v0)}L${at(u1, v1)}`;
        if (rnd() < 0.12) inner += `M${at(u0 + 4, v0 + 4)}L${at(u1 - 4, v0 + 4)}L${at(u1 - 4, v1 - 4)}`;
        if (rnd() < 0.7 * marks) specks += `M${at(u0 + w * rnd(), v0 + h * rnd())}l${(rnd() * 8 - 3).toFixed(1)} ${(rnd() * 8 - 3).toFixed(1)}`;
        if (rnd() < 0.5 * marks) specks += `M${at(u0 + w * rnd(), v0 + h * rnd())}l5 -3`;
        if (rnd() < 0.3) teal += `M${at(u0 + w / 2, v0 + h / 2)}l0 6`;
    })(Math.min(...us), Math.min(...vs), Math.max(...us), Math.max(...vs));
    path(lots, DARK, 1, null, g);
    path(inner, "#0a7a1a", 1, null, g);
    path(teal, "#008080", 1, null, g);
    path(specks, "#000", 1, null, g);
}

// site boundary
line("1100,70 1279,50", YELLOW);
line("1279,50 1300,430 1350,975 1455,1388", "#000");
line("1455,1388 1310,1410", YELLOW);
line("165,950 100,1050 0,1198", YELLOW);
line("0,1325 200,1375 330,1405 500,1440 800,1452 1000,1445 1310,1410", YELLOW);
line("1170,128 1177,128 1177,139 1170,139 1170,128", "#000");
line("-6,1140 43,1140 43,1163 -6,1163", "#000");
line("-6,1190 17,1211", "#f00");
line("-6,1228 10,1238", "#f00");
line("-6,1250 30,1190", "#ffa500");
curve("-6,1262 5,1288 50,1300", "#ffa500");
curve("25,1205 55,1235 52,1296", "#3cb371");

// roads
road("350,55 440,90 540,125 640,122 900,98 1110,72", [
    [-16, PINK, 1, "9 4 3 3"], [-11, GREEN, 1, "14 5"], [-7, CYAN, 1], [-2, BLUE, 1, "24 3"], [2, YELLOW], [6, CYAN], [10, BLUE]]);
line("740,130 1110,92", PINK, 1, "8 5");
road("430,112 408,130 390,205 350,400 330,490 275,715 225,830 165,945", [
    [13, PINK], [8, GREEN], [4, CYAN], [-6, BLUE], [-12, CYAN], [-17, BLUE]]);
road("1090,65 1100,300 1120,510 1140,700 1150,950 1170,1150 1198,1400", [
    [-9, GREEN, 2, "16 5"], [-3, CYAN, 2], [3, BLUE, 1], [8, CYAN], [-14, BLUE, 1, "12 9"]]);
road("115,1310 240,1350 390,1390 550,1412 750,1418 950,1412 1310,1395", [
    [-8, CYAN], [4, BLUE, 1, "40 4"], [9, GREEN], [0, CYAN]]);
road("305,1400 450,1435 650,1460 850,1464 1100,1450 1310,1432", [
    [-14, GREEN, 1, "30 6"], [-8, CYAN], [0, CYAN], [6, BLUE, 1, "30 4"], [12, GREEN], [-22, CYAN, 2]]);
road("290,1415 400,1455 470,1480 800,1486 1000,1484", [[0, CYAN], [4, GREEN, 2], [-8, GREEN]]);
road("1000,1484 1310,1450", [[0, GREEN, 2, "18 3"], [-4, BLUE], [-8, CYAN]]);
ticks("385,180 345,420 315,520 255,720 150,920", 58, -12, BLUE);
ticks("1115,320 1150,700 1168,950 1200,1370", 58, 12, BLUE);

// junction at the north-west corner
line("345,70 400,85 440,100", GREEN);
line("345,55 395,62 430,80", GREEN);
line("350,48 385,38 400,45", PINK);
line("405,25 400,90 385,190", CYAN);
line("438,45 432,95 480,90", CYAN);
line("410,35 430,50 412,62 430,70", "#777");
line("1065,60 1115,55 1112,85 1070,80", CYAN);
line("1095,70 1100,100 1115,85", BLUE, 2);

// parcels
block("435,107 548,137 520,250 500,250 470,383 378,378", 14, 27);
block("378,378 470,383 445,487 357,483", 14, 60, 0.3);
block("350,505 433,523 378,742 293,712", 15, 26);
block("250,755 365,785 308,1003 188,940", 18, 33);
block("170,970 297,1030 218,1330 118,1305 155,1120 95,1098", 20, 50);
block("90,1105 150,1125 100,1315 62,1300 60,1240 32,1190", 18, 34);
block("700,240 900,225 915,240 918,355 665,380", -5, 150, 0.5);
block("665,380 915,355 935,530 655,550 625,528", -5, 70);
block("925,232 1070,208 1085,225 1092,350 935,362", -5, 60);
block("935,362 1092,350 1105,510 945,525", -5, 28);
block("615,580 935,545 942,710 865,715 865,740 570,765 585,665", -5, 46);
block("590,670 770,650 800,690 585,715", -5, 18);
block("950,545 1105,530 1115,640 1048,655 1035,715 965,718", -4, 32);
block("550,810 960,765 968,960 525,1005", -5, 46);
block("970,760 1040,750 1060,810 975,825", -4, 90, 0.3);
block("975,825 1130,815 1135,940 985,950", -4, 42);
block("485,1035 705,1015 740,1395 400,1395", -4, 42);
block("715,1005 970,980 982,1085 727,1145", -4, 66);
block("727,1090 860,1080 860,1133 730,1145", -4, 34);
block("727,1145 985,1090 1003,1390 745,1395", -3, 190, 0.8);
block("748,1295 888,1292 888,1340 748,1342", -2, 44);
block("990,980 1140,965 1175,1375 1165,1390 1020,1390", -4, 46);
line("745,1160 865,1145 868,1195 760,1210 745,1160", "#444");
line("890,1095 940,1095 945,1195 980,1195 892,1205 890,1095", "#8a8aa0", 2);
line("730,300 735,370 700,300", "#8a2a8a");
line("760,262 865,250 870,320 915,330", DARK);
line("370,520 430,530 425,555 375,545 370,520", "#8a8aa0");

// inner streets
const street = [[0, "#fff", 6], [-8, CYAN], [8, CYAN], [11, GREEN, 1, "20 12"]];
road("605,567 940,532 1110,515", street);
road("565,788 955,745", [[0, "#fff", 10], [-16, CYAN], [-11, BLUE], [11, CYAN], [15, BLUE]]);
road("405,1030 710,1003 975,968 1140,950", street);
road("690,250 605,570 535,825 480,1025 388,1372", [[-8, CYAN], [-12, GREEN], [12, CYAN]]);
road("912,235 940,530 960,750 978,970 1010,1392", [[0, "#fff", 6], [-8, CYAN], [8, CYAN], [11, YELLOW]]);
road("710,1000 740,1400", [[0, "#fff", 5], [-7, CYAN], [7, CYAN]]);
road("332,492 400,490 480,505 540,530 605,565", [[-11, GREEN], [-7, CYAN], [9, CYAN], [12, GREEN]]);
road("262,725 340,755 425,778 545,790", [[-11, BLUE], [-7, CYAN], [9, CYAN], [13, PINK]]);
road("155,940 230,985 300,1020 380,1033 480,1022", [[-12, CYAN], [-8, BLUE], [9, CYAN], [13, GREEN]]);
line("600,570 650,565", YELLOW, 2);
line("520,790 560,788 575,700", YELLOW, 2);
line("880,230 960,217 1065,200", YELLOW);
line("960,742 1050,735 1045,655 1065,650", YELLOW, 2);
line("1050,735 1058,800 1120,812", YELLOW, 2);
line("95,1100 130,1110 155,1130 150,1190 120,1290", CYAN, 2);
line("735,130 700,235", BLUE);
line("540,174 648,174", "#000");
line("700,237 880,215 1090,193", BLUE);

// river park
curve("548,140 575,240 545,330 510,400 500,460 545,525", GREEN);
curve("550,160 572,250 535,340 500,460 470,510", CYAN, 2);
curve("600,140 630,170 645,300 615,420 590,480 565,545", CYAN, 2);
line("560,140 630,140 640,165 638,240", GREEN);
line("632,150 640,245", YELLOW);
curve("525,535 490,560 490,600 505,650 470,690 410,740 430,775", PINK);
curve("525,550 560,560 562,620 540,700 530,770 440,770", GREEN);
curve("485,540 460,590 440,640 410,700 390,765", CYAN, 2);
line("475,550 485,542 495,553 485,565 475,550", CYAN, 3);
curve("600,570 570,640 540,700 535,780", CYAN, 2);
line("465,690 490,765", BLUE);
curve("390,790 360,850 370,930 375,1020", GREEN);
curve("380,780 365,870 345,950 338,1015", CYAN, 2);
curve("425,795 470,820 430,900 430,990 405,1020", PINK);
curve("470,790 500,830 440,900 480,960 420,1020", CYAN);
line("370,927 425,923", BLUE);
line("475,810 500,815 495,850 470,840 500,830", CYAN, 2);
curve("370,1040 375,1130 290,1180 275,1250 265,1310 315,1370", GREEN);
curve("410,1040 425,1110 385,1180 345,1300 350,1368", PINK);
curve("335,1035 300,1080 280,1150 250,1260 243,1340", CYAN, 2);
curve("310,1080 340,1110 370,1100 300,1150 270,1200 275,1290 255,1340", CYAN, 2);
curve("435,1040 435,1150 385,1230 370,1300 350,1370", CYAN, 2);
line("465,1040 385,1370", PINK);
line("285,1312 345,1325", BLUE);
line("315,1365 285,1310", PINK);
road("390,1250 370,1400 350,1480", [[-8, CYAN], [8, CYAN], [14, GREEN]]);

// buildings outside the parcels
line("445,925 475,930 460,985 432,975 445,925", PINK, 2);
line("440,955 465,960", PINK);
line("370,1260 385,1262 380,1285 368,1282 370,1260", PINK);
line("1050,670 1090,672 1092,700 1075,705 1085,745 1098,750 1100,790 1065,785 1062,760", PINK, 2);
line("1052,680 1072,680 1072,700 1052,700", PINK);
line("1050,660 1135,655 1135,790 1070,795 1060,760", CYAN);
curve("1113,725 1121,700 1130,725 1121,745 1113,725", "#fa8072");
line("290,1450 326,1450 326,1510 290,1510 290,1450", PINK);
line("338,1490 408,1520 400,1530 335,1505 338,1490", PINK);
line("385,1497 412,1497 412,1525", PINK);
line("340,1460 470,1470 475,1500 440,1530 420,1510 460,1520", CYAN);
line("330,1465 380,1490 470,1492", GREEN);
line("865,1480 870,1525 862,1528", CYAN, 2);
line("885,1480 880,1520 895,1528 950,1528", CYAN, 2);
line("808,1440 808,1482 850,1482 850,1435", BLUE);
line("810,1498 860,1500", GREEN);
line("890,1492 950,1490", GREEN);
line("1145,720 1175,720", BLUE, 2);

// main pipes
[
    "385,205 370,300 345,420 332,490 300,615 262,725 225,810 155,940",
    "678,295 605,570 560,760",
    "535,825 480,1025 390,1370",
    "918,262 940,530 960,750 978,970 1010,1390",
    "655,562 1165,510",
    "570,785 955,745",
    "405,1028 710,1000 975,968 1200,945",
    "710,1000 740,1400",
    "1142,950 1175,1360 1165,1385 1060,1392",
    "665,380 865,367", "665,380 655,500 665,545 900,520 895,465", "795,470 910,460 905,410",
    "930,300 930,235 985,230", "935,250 942,360 1090,350", "1010,360 1015,410 1065,418 1070,460",
    "965,470 965,425 1010,420", "945,465 995,465", "1040,465 1100,455", "940,375 1000,368", "920,300 935,302",
    "440,142 540,172 520,250 503,248 470,380 415,365", "440,142 378,385", "425,205 530,225", "415,245 495,270",
    "480,360 520,375", "540,200 560,208", "350,375 378,388",
    "355,535 415,560 375,735 310,710", "300,615 390,643", "345,575 318,680", "388,500 382,540", "390,580 388,605 405,610",
    "350,575 380,580", "335,670 385,685", "345,735 345,755",
    "250,757 280,768 240,850 215,945 308,980 360,790 305,770", "355,822 380,828", "270,965 270,990",
    "300,1030 215,985 180,980 160,1005 150,1050", "150,1090 250,1125", "185,1110 125,1290 130,1305 220,1330 260,1190",
    "65,1180 140,1205 135,1180", "115,1205 100,1268 70,1260", "120,1305 315,1370",
    "620,612 735,600 740,648 585,670 575,765", "730,565 740,650 805,650", "585,715 765,700 770,675", "575,765 860,738",
    "850,545 860,650", "808,605 860,597", "810,600 820,710 860,712", "860,680 865,765 880,795", "935,550 942,700 935,712 865,720",
    "955,545 960,625 980,630 985,670", "1025,540 1035,620 1070,622", "965,680 1030,670 1035,710 965,718 965,680",
    "965,545 1020,540", "1045,540 1105,535",
    "550,815 705,803 718,990", "545,885 625,875 632,985", "650,870 712,862", "525,938 625,930", "530,1000 715,980",
    "765,810 775,930 825,925 830,970", "795,805 935,793", "930,810 935,922 830,932", "632,785 632,805", "650,925 712,920",
    "990,830 1125,815 1135,935 985,945 978,860",
    "612,1015 618,1260", "625,1028 700,1020", "500,1155 618,1140", "500,1155 505,1220", "440,1225 515,1220 520,1325",
    "440,1225 410,1375 490,1378 485,1230", "485,1260 505,1262 512,1325", "515,1290 590,1285", "590,1268 720,1256",
    "590,1268 605,1385", "650,1265 655,1335 725,1330 730,1385", "435,1285 485,1285", "525,1355 595,1350",
    "715,1200 720,1245", "725,1030 730,1145 860,1133", "740,1048 765,1048 765,1088 850,1082", "855,990 857,1080",
    "860,990 870,1020 878,1115", "970,1100 975,1165",
    "1000,1000 1130,990 1135,1070 980,1085", "1000,1000 1035,1385", "1010,1155 1135,1148", "1000,1230 1165,1215",
    "1025,1310 1080,1306", "1100,1302 1150,1300 1155,1375", "1135,1100 1145,1195", "1150,1240 1158,1300"
].forEach(s => line(s, BROWN, 3));

line("965,213 1065,203 1083,220 1090,350", BROWN, 4);
line("1090,350 1110,510 1117,635 1105,648 1050,655", BROWN, 3);
line("332,490 400,495 480,505 535,525", BROWN, 4);
line("570,540 605,568", BROWN, 3);
line("262,725 340,755 425,778 520,790", BROWN, 4);
line("155,940 230,985 300,1020 380,1033 480,1022", BROWN, 4);
line("405,1390 480,1402 740,1405 960,1402", BROWN, 4);
line("635,247 890,225", BROWN, 4);

// sheet frame
line("59,20 1389,20 1389,1535 59,1535 59,20", "#000");
```
